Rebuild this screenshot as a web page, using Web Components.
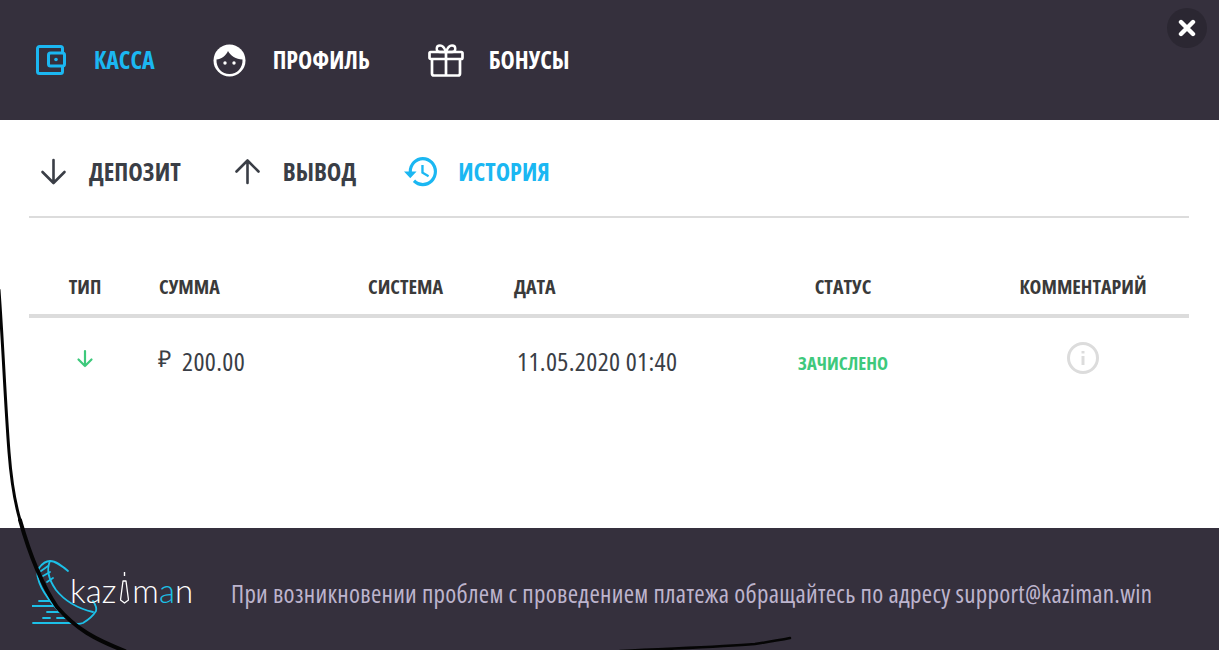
<!DOCTYPE html><html lang="ru"><head><meta charset="utf-8"><style>
html,body{margin:0;padding:0;background:#fff}
body{width:1219px;height:650px;overflow:hidden;position:relative;font-family:"Open Sans","Noto Sans",sans-serif}
</style></head><body>
<cash-modal>
  <main-nav slot="top">
    <nav-item active label="КАССА" gap="28" next="58" icon="wallet" w="30"></nav-item>
    <nav-item label="ПРОФИЛЬ" gap="27" next="58" icon="face" w="33"></nav-item>
    <nav-item label="БОНУСЫ" gap="25" next="0" icon="gift" w="36"></nav-item>
  </main-nav>
  <sub-nav slot="mid">
    <nav-item dark sub label="ДЕПОЗИТ" gap="22" next="53" icon="down" w="27"></nav-item>
    <nav-item dark sub label="ВЫВОД" gap="22" next="48" icon="up" w="27"></nav-item>
    <nav-item dark sub active label="ИСТОРИЯ" gap="21" next="0" icon="history" w="33"></nav-item>
  </sub-nav>
  <history-table slot="mid"></history-table>
  <site-footer slot="bottom"></site-footer>
</cash-modal>
<script>
const ICONS={
wallet:`<svg width="30" height="30" viewBox="0 0 30 30" fill="none" stroke="currentColor" stroke-width="3" stroke-linejoin="round"><path d="M26.500 7V3.500a2 2 0 0 0-2-2H3.500a2 2 0 0 0-2 2v23a2 2 0 0 0 2 2h21a2 2 0 0 0 2-2V21"/><rect x="12.500" y="8" width="16" height="13" rx="2"/><circle cx="20" cy="14.500" r="1.800" fill="currentColor" stroke="none"/></svg>`,
face:`<svg width="33" height="33" viewBox="0 0 33 33"><circle cx="16.500" cy="16.500" r="16" fill="#fff"/><path d="M3.500 15.500C8 15 13 12 15 7c2.500 5 8 8 14.500 8.500.500 8.500-5.500 14.500-13 14.500S3 24 3.500 15.500z" fill="#35303d"/><circle cx="12" cy="19" r="1.700" fill="#fff"/><circle cx="21" cy="19" r="1.700" fill="#fff"/></svg>`,
gift:`<svg width="36" height="33" viewBox="0 0 36 33" fill="none" stroke="#fff" stroke-width="2.700" stroke-linejoin="round"><rect x="1.500" y="8" width="33" height="7" rx="1.200"/><path d="M4 15v14.500a2 2 0 0 0 2 2h24a2 2 0 0 0 2-2V15M18 8v23.500"/><path d="M18 8c-1-3-3-6.500-6-6.500-2 0-3.300 1.300-3.300 3.200S10 8 12 8zM18 8c1-3 3-6.500 6-6.500 2 0 3.300 1.300 3.300 3.200S26 8 24 8z" stroke-width="2.400"/></svg>`,
down:`<svg width="27" height="27" viewBox="0 0 27 27" fill="none" stroke="currentColor" stroke-width="2.600" stroke-linecap="round" stroke-linejoin="round"><path d="M13.500 2v22.500M2.500 14l11 11 11-11"/></svg>`,
up:`<svg width="27" height="27" viewBox="0 0 27 27" fill="none" stroke="currentColor" stroke-width="2.600" stroke-linecap="round" stroke-linejoin="round"><path d="M13.500 25V2.500M2.500 13.500l11-11 11 11"/></svg>`,
history:`<svg width="33" height="30" viewBox="1 3 21 18.500" preserveAspectRatio="none" fill="#1bb7f2"><path d="M13 3a9 9 0 0 0-9 9H1l3.890 3.890.070.140L9 12H6c0-3.870 3.130-7 7-7s7 3.130 7 7-3.130 7-7 7c-1.930 0-3.680-.790-4.940-2.060l-1.420 1.420A8.954 8.954 0 0 0 13 21a9 9 0 0 0 0-18zm-1 5v5l4.280 2.540.720-1.210-3.500-2.080V8H12z"/></svg>`
};
function def(name,css,html){
  customElements.define(name,class extends HTMLElement{
    constructor(){super();this.attachShadow({mode:'open'});}
    connectedCallback(){this.shadowRoot.innerHTML=`<style>${css}</style>${typeof html==='function'?html(this):html}`;}
  });
}
def('cash-modal',`
:host{display:block;width:1219px;height:650px;position:relative;overflow:hidden;color:#3a3a3a}
.top{height:120px;background:#35303d;box-sizing:border-box}
.mid{height:408px;background:#fff;box-sizing:border-box;padding:0 30px 0 29px}
.bottom{height:122px;background:#35303d;box-sizing:border-box}
.close{position:absolute;left:1167px;top:8px;width:40px;height:40px;border-radius:50%;background:#2b2732;display:flex;align-items:center;justify-content:center}
.scrawl{position:absolute;left:0;top:0;pointer-events:none}
`,`<div class="top"><slot name="top"></slot></div>
<div class="mid"><slot name="mid"></slot></div>
<div class="bottom"><slot name="bottom"></slot></div>
<div class="close"><svg width="18" height="18" viewBox="0 0 18 18" stroke="#fff" stroke-width="4.400" stroke-linecap="round"><path d="M3 3l12 12M15 3L3 15"/></svg></div>
<svg class="scrawl" width="1219" height="650" fill="none" stroke="#050505" stroke-linecap="round"><path stroke-width="3" d="M-1 290C3 345 5 400 9 452C11 478 15 503 20 520"/><path stroke-width="4" d="M20 520C27 545 40 582 57 607C68 620 76 626 87 633C100 641 112 646 125 651"/><path stroke-width="2.500" d="M620 651C680 648 720 647 755 644C768 642 780 640 790 638"/></svg>`);
def('main-nav',`:host{display:flex;height:120px;align-items:center;padding:0 0 0 36px;box-sizing:border-box}`,`<slot></slot>`);
def('sub-nav',`:host{display:flex;height:98px;align-items:center;padding:7px 0 0 11px;box-sizing:border-box;border-bottom:2px solid #dcdcdc}`,`<slot></slot>`);
def('nav-item',`
:host{display:flex;align-items:center;color:#fff;font:700 24px/32px "Open Sans",sans-serif;font-stretch:75%}
:host([sub]){font-size:24.600px}
:host([sub][active]){font-size:24.300px}
:host([dark]){color:#3a3e46}
:host([active]){color:#1bb7f2}
svg{display:block}
`,el=>{
  el.style.marginRight=(el.getAttribute('next')||0)+'px';
  return `<span style="display:block;margin-right:${el.getAttribute('gap')}px">${ICONS[el.getAttribute('icon')]}</span><span>${el.getAttribute('label')}</span>`;
});
def('history-table',`
:host{display:block;padding-top:51px;font-family:"Open Sans",sans-serif}
.g{display:grid;grid-template-columns:112px 209px 146px 213px 268px 212px}
.h{height:35px;padding-bottom:10px;align-items:center;border-bottom:4px solid #dcdcdc;font:700 20px/28px "Open Sans",sans-serif;font-stretch:75%;color:#3a3a3a}
.c{text-align:center}.l{padding-left:18px}
.r{height:87px;align-items:center;font-size:26px;letter-spacing:.35px;font-stretch:75%;color:#3a3e46}
.sum{padding-left:17px;display:flex;align-items:center;position:relative;top:-1px}
.rub{font:23px "Liberation Sans",sans-serif;margin-right:11px;position:relative;top:-3px;letter-spacing:0}
.d{padding-left:21px;position:relative;top:-1px}
.st{font-weight:700;font-size:18.600px;letter-spacing:0;color:#3ec97c;text-align:center;position:relative;top:1px}
svg{display:block;margin:0 auto}
`,`<div class="g h"><div class="c">ТИП</div><div class="l">СУММА</div><div class="l">СИСТЕМА</div><div class="l">ДАТА</div><div class="c">СТАТУС</div><div class="c">КОММЕНТАРИЙ</div></div>
<div class="g r"><div><svg width="18" height="20" viewBox="0 0 18 20" fill="none" stroke="#3ec97c" stroke-width="2.200" stroke-linecap="round" stroke-linejoin="round" style="position:relative;top:-3px"><path d="M9 2v15M2.500 10.500L9 17l6.500-6.500"/></svg></div><div class="sum"><span class="rub">₽</span>200.00</div><div></div><div class="d">11.05.2020 01:40</div><div class="st">ЗАЧИСЛЕНО</div><div><svg width="32" height="32" viewBox="0 0 32 32" style="position:relative;top:-4px" fill="none" stroke="#dcdcdc"><circle cx="16" cy="16" r="14.500" stroke-width="3"/><path d="M16 14v9" stroke-width="3"/><path d="M16 9v2.500" stroke-width="3"/></svg></div></div>`);
def('site-footer',`
:host{display:flex;align-items:center;height:122px;box-sizing:border-box;padding:4px 0 0 32px;color:#bdb4cd;font:25px/32px "Open Sans",sans-serif;font-stretch:75%;letter-spacing:.28px}
.logo{width:199px;height:70px;flex:none;position:relative}
.logo svg{position:absolute;left:0;top:0}
.word{position:absolute;left:38px;top:14px;font:300 33px/40px Lato,sans-serif;font-stretch:normal;color:#fff;letter-spacing:0;white-space:nowrap;display:flex;align-items:center}
.word b{font-weight:300;color:#1cc0e8}
.word svg{position:static;margin:-4px 3px 0 4px}
.msg{margin-top:4px;white-space:nowrap}
`,`<div class="logo"><svg width="160" height="70" viewBox="32 556 160 70" fill="none" stroke="#1cc0e8" stroke-width="1.800" stroke-linecap="round">
<path d="M39 568C42 564 46 561 50 561C56 561 62 566 68 571"/>
<path d="M39 568C37 572 37 575 38 578C40 588 52 608 73 623C76 624 80 624 83 623C88 620 93 616 96 611C97 608 95 604 93 601"/>
<path d="M50 561C46 570 49 580 56 590C64 600 76 608 93 612"/>
<path d="M41 571L48 566M43 576L50 572M47 582L53 578"/>
<path d="M39 601H50M32 606H53M47 612H60M43 618H50M57 618H67M33 623H72"/>
</svg><div class="word"><span>kaz</span><svg width="9" height="32" viewBox="0 0 9 32" fill="none" stroke="#fff" stroke-width="1.400" stroke-linejoin="round"><path d="M4.500 0v4"/><path d="M3 9h3l2.500 19-4 3-4-3z" stroke-width="1.300"/></svg><span>m</span><b>a</b><span>n</span></div></div><span class="msg">При возникновении проблем с проведением платежа обращайтесь по адресу support@kaziman.win</span>`);
</script></body></html>
